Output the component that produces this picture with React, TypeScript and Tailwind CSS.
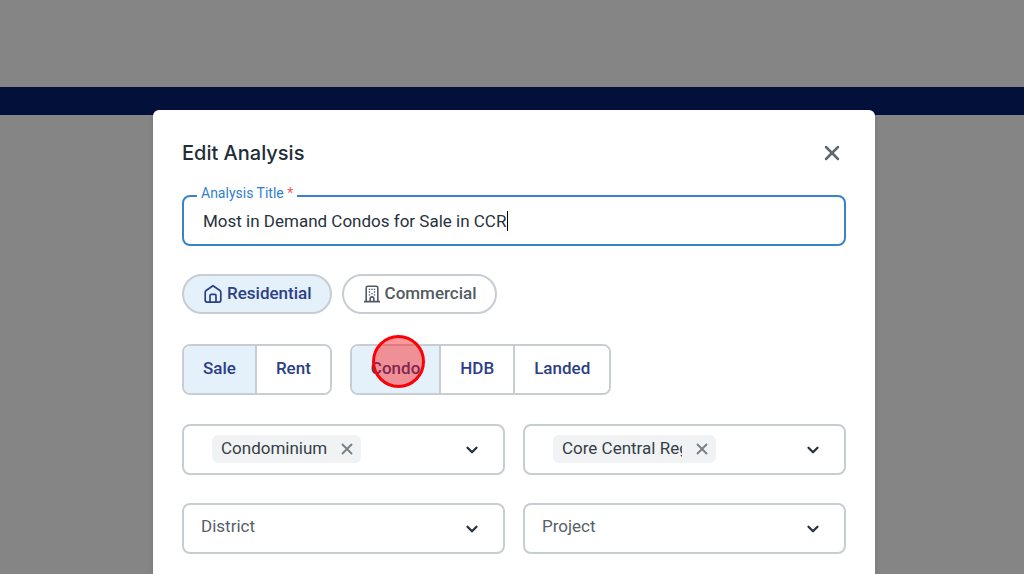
import React, { useState } from 'react'
import { ChevronDown, X } from 'lucide-react'
import clsx from 'clsx'

function HomeIcon() {
  return (
    <svg viewBox="0 0 18 20" className="h-5 w-[18px]" fill="none" stroke="currentColor" strokeWidth="1.7" strokeLinejoin="round">
      <path d="M1.2 8.4c0-.8.3-1.4.9-1.900L9 1.800l6.900 4.700c.6.5.9 1.100.9 1.900v7.700c0 1.200-.8 2-2 2H3.200c-1.200 0-2-.8-2-2z" />
      <path d="M6 18v-6.300c0-.9.5-1.400 1.400-1.400h3.200c.9 0 1.400.5 1.400 1.400V18" />
    </svg>
  )
}

function BuildingIcon() {
  return (
    <svg viewBox="0 0 16 18" className="h-[18px] w-4" fill="none" stroke="currentColor" strokeWidth="1.6">
      <path d="M0 16.600h16M2.200 16.600V2.800c0-1 .6-1.600 1.600-1.600h8.400c1 0 1.600.6 1.600 1.600v13.800" />
      <path d="M6.200 16.600v-2.800c0-1.200.7-1.900 1.800-1.900s1.800.7 1.800 1.900v2.800" />
      <path d="M4.800 4.300h1.400M7.300 4.300h1.400M9.800 4.300h1.400M4.800 7h1.400M9.800 7h1.400M7.300 8.600h1.400M4.800 9.800h1.400M9.800 9.800h1.400" strokeWidth="1.300" />
    </svg>
  )
}

interface SegmentedProps {
  label: string
  options: string[]
  value: string
  onChange: (value: string) => void
  marked?: string
}

function Segmented({ label, options, value, onChange, marked }: SegmentedProps) {
  return (
    <div role="group" aria-label={label} className="flex h-[51px] rounded-lg border-2 border-[#c8cdd2]">
      {options.map((option) => (
        <button
          key={option}
          type="button"
          aria-pressed={option === value}
          onClick={() => onChange(option)}
          className={clsx(
            'relative border-l-2 border-[#c8cdd2] px-[19px] pb-0.5 font-medium text-[#2b3f86] first:rounded-l-md first:border-l-0 last:rounded-r-md',
            option === value ? 'bg-[#e4f0fa]' : 'bg-white'
          )}
        >
          {option}
          {option === marked && (
            <span className="absolute -top-[11px] left-5 size-[53px] rounded-full border-3 border-[#fb0007] bg-[#ff0000]/40" />
          )}
        </button>
      ))}
    </div>
  )
}

interface ChipFieldProps {
  label: string
  value: string
}

function ChipField({ label, value }: ChipFieldProps) {
  const [selected, setSelected] = useState(true)

  return (
    <div role="group" aria-label={label} className="flex h-[51px] items-center justify-between rounded-lg border-2 border-[#c8cdd2] pr-[22px] pl-7">
      {selected && (
        <span className="mb-0.5 flex h-7 items-center gap-[11px] rounded-md bg-[#f1f2f4] px-[9px] text-[#343f48]">
          <span className="max-w-[120px] overflow-hidden whitespace-nowrap">{value}</span>
          <button type="button" aria-label={`Remove ${value}`} onClick={() => setSelected(false)} className="-mr-1 text-[#7a8187]">
            <X size={18} strokeWidth={2.5} />
          </button>
        </span>
      )}
      <button type="button" aria-label={`Open ${label}`} className="ml-auto text-[#27313b]">
        <ChevronDown size={18} strokeWidth={3} />
      </button>
    </div>
  )
}

function SelectField({ label }: { label: string }) {
  return (
    <div className="relative">
      <select
        aria-label={label}
        defaultValue=""
        className="h-[51px] w-full appearance-none rounded-lg border-2 border-[#c8cdd2] bg-white pr-12 pb-1 pl-[17px] text-[#56606a] outline-none"
      >
        <option value="">{label}</option>
      </select>
      <ChevronDown size={18} strokeWidth={3} className="pointer-events-none absolute top-[17px] right-6 text-[#27313b]" />
    </div>
  )
}

const pillClass = 'flex h-10 items-center gap-[5px] rounded-full border-2 border-[#c8cdd2] pr-[18px] pl-5 font-medium'

export default function App() {
  const [title, setTitle] = useState('Most in Demand Condos for Sale in CCR')
  const [category, setCategory] = useState('Residential')
  const [deal, setDeal] = useState('Sale')
  const [property, setProperty] = useState('Condo')

  return (
    <div className="relative min-h-screen overflow-hidden bg-[#858585] pt-[87px] font-['Roboto',sans-serif] text-[17px]">
      <div className="h-7 bg-[#03103a]" />

      <div className="absolute inset-0 flex justify-center pt-[110px] pl-1">
        <div role="dialog" aria-label="Edit Analysis" className="w-full max-w-[722px] rounded-t-md bg-white px-[29px] pt-[29px] shadow-md">
          <div className="flex h-7 items-center justify-between pr-0.5">
            <h1 className="font-['Inter',sans-serif] text-[20px] font-medium text-[#222d37]">Edit Analysis</h1>
            <button type="button" aria-label="Close" className="text-[#5f686f]">
              <X size={24} strokeWidth={2.5} />
            </button>
          </div>

          <div className="relative mt-7">
            <label htmlFor="title" className="absolute -top-3 left-[15px] bg-white px-1 text-[14px] leading-5 text-[#2f7fcf]">
              Analysis Title <span className="text-[#ee5a5f]">*</span>
            </label>
            <input
              id="title"
              value={title}
              onChange={(e) => setTitle(e.target.value)}
              className="h-[51px] w-full rounded-lg border-2 border-[#3a82c9] px-[19px] text-[#27323b] outline-none"
            />
            <span className="absolute top-4 left-[325px] h-5 w-px bg-black" />
          </div>

          <div className="mt-7 flex gap-[10px]">
            <button
              type="button"
              aria-pressed={category === 'Residential'}
              onClick={() => setCategory('Residential')}
              className={clsx(pillClass, category === 'Residential' ? 'bg-[#e4f0fa] text-[#2b3f86]' : 'bg-white text-[#525b63]')}
            >
              <HomeIcon />
              Residential
            </button>
            <button
              type="button"
              aria-pressed={category === 'Commercial'}
              onClick={() => setCategory('Commercial')}
              className={clsx(pillClass, category === 'Commercial' ? 'bg-[#e4f0fa] text-[#2b3f86]' : 'bg-white text-[#525b63]')}
            >
              <BuildingIcon />
              Commercial
            </button>
          </div>

          <div className="mt-[30px] flex gap-[18px]">
            <Segmented label="Deal type" options={['Sale', 'Rent']} value={deal} onChange={setDeal} />
            <Segmented label="Property type" options={['Condo', 'HDB', 'Landed']} value={property} onChange={setProperty} marked="Condo" />
          </div>

          <div className="mt-[29px] grid grid-cols-2 gap-x-[18px] gap-y-7">
            <ChipField label="Property" value="Condominium" />
            <ChipField label="Region" value="Core Central Region" />
            <SelectField label="District" />
            <SelectField label="Project" />
          </div>
        </div>
      </div>
    </div>
  )
}
